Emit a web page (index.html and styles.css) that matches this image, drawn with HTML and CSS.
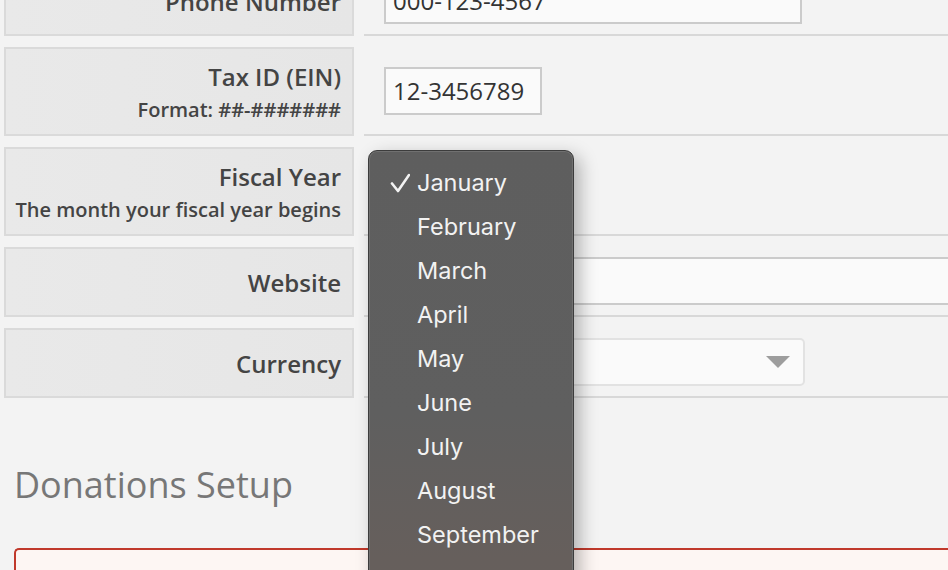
FILE: index.html
```html
<!DOCTYPE html>
<html lang="en">
<head>
    <meta charset="UTF-8">
    <meta name="viewport" content="width=device-width, initial-scale=1.0">
    <title>Organization Settings</title>
    <link rel="stylesheet" href="styles.css">
</head>
<body>
    <div class="settings">
        <div class="row">
            <div class="label"><span class="label-main">Phone Number</span></div>
            <div class="field"><input class="text-input phone" type="text" value="000-123-4567"></div>
        </div>
        <div class="row">
            <div class="label double">
                <span class="label-main">Tax ID (EIN)</span>
                <span class="label-sub">Format: ##-#######</span>
            </div>
            <div class="field"><input class="text-input tax" type="text" value="12-3456789"></div>
        </div>
        <div class="row">
            <div class="label double">
                <span class="label-main">Fiscal Year</span>
                <span class="label-sub">The month your fiscal year begins</span>
            </div>
            <div class="field">
                <div class="select fiscal"><span>January</span><span class="arrow"></span></div>
            </div>
        </div>
        <div class="row">
            <div class="label"><span class="label-main">Website</span></div>
            <div class="field"><input class="text-input website" type="text" value=""></div>
        </div>
        <div class="row">
            <div class="label"><span class="label-main">Currency</span></div>
            <div class="field">
                <div class="select currency"><span>USD</span><span class="arrow"></span></div>
            </div>
        </div>

        <h2 class="section-title">Donations Setup</h2>
        <div class="alert"></div>

        <ul class="menu">
            <li class="selected">
                <svg class="check" width="20" height="20" viewBox="0 0 20 20">
                    <path d="M2 10.5 L8 18 L19 2" fill="none" stroke="#f2f2f2" stroke-width="2.6" stroke-linecap="round" stroke-linejoin="round"/>
                </svg>
                January
            </li>
            <li>February</li>
            <li>March</li>
            <li>April</li>
            <li>May</li>
            <li>June</li>
            <li>July</li>
            <li>August</li>
            <li>September</li>
            <li>October</li>
            <li>November</li>
            <li>December</li>
        </ul>
    </div>
</body>
</html>
```

FILE: styles.css
```css
body {
    margin: 0;
    background-color: #f3f3f3;
    font-family: "Open Sans", Arial, sans-serif;
    color: #444;
    overflow: hidden;
}

.settings {
    position: relative;
    margin-top: -34px;
    padding-left: 4px;
}

.row {
    display: flex;
    margin-bottom: 11px;
}

.label {
    width: 350px;
    min-height: 70px;
    box-sizing: border-box;
    border: 2px solid #dadada;
    background: linear-gradient(to right, #e9e9e9, #e6e6e6);
    padding: 2px 11px 0 4px;
    display: flex;
    flex-direction: column;
    justify-content: center;
    align-items: flex-end;
    white-space: nowrap;
}

.label.double {
    padding: 11px 11px 8px 4px;
}

.label-main {
    font-size: 24px;
    font-weight: 600;
    line-height: 34px;
    color: #444;
}

.label-sub {
    font-size: 20px;
    font-weight: 600;
    line-height: 32px;
    color: #444;
}

.field {
    flex: 1;
    margin-left: 10px;
    padding-left: 20px;
    border-bottom: 2px solid #d8d8d8;
    display: flex;
    align-items: center;
    min-width: 0;
}

.text-input {
    height: 48px;
    box-sizing: border-box;
    border: 2px solid #cbcbcb;
    background: #fafafa;
    font-family: "Open Sans", Arial, sans-serif;
    font-size: 24px;
    color: #333;
    padding: 0 7px;
    outline: none;
}

.phone {
    width: 418px;
}

.tax {
    width: 158px;
}

.website {
    flex: 1;
    margin-right: -20px;
}

.select {
    height: 48px;
    box-sizing: border-box;
    border: 2px solid #e2e2e2;
    border-radius: 5px;
    background: #fafafa;
    font-size: 24px;
    color: #333;
    padding: 0 12px;
    display: flex;
    align-items: center;
    justify-content: space-between;
}

.fiscal {
    width: 160px;
}

.currency {
    width: 421px;
}

.arrow {
    width: 0;
    height: 0;
    border-left: 12px solid transparent;
    border-right: 12px solid transparent;
    border-top: 12px solid #9d9d9d;
    margin-right: 1px;
}

.section-title {
    margin: 63px 0 0 10px;
    font-size: 36px;
    font-weight: 400;
    line-height: 48px;
    color: #777;
}

.alert {
    margin: 39px 0 0 10px;
    height: 80px;
    border: 2px solid #c0392b;
    border-right: none;
    border-radius: 5px 0 0 0;
    background: #fdf6f3;
}

.menu {
    position: absolute;
    left: 368px;
    top: 184px;
    width: 206px;
    height: 480px;
    box-sizing: border-box;
    margin: 0;
    padding: 10px 0 0;
    list-style: none;
    border: 1px solid #3c3c3c;
    border-radius: 9px;
    background: linear-gradient(to bottom, #5e5e5e 0%, #5f5f5f 55%, #665f5c 85%, #675f5c 100%);
    box-shadow: inset 0 0 0 1px #707070, 6px 6px 18px rgba(0, 0, 0, 0.28);
}

.menu li {
    position: relative;
    height: 44px;
    line-height: 44px;
    padding-left: 48px;
    font-family: Inter, "Noto Sans", sans-serif;
    font-size: 23.5px;
    color: #f2f2f2;
}

.check {
    position: absolute;
    left: 21px;
    top: 12px;
}
```
